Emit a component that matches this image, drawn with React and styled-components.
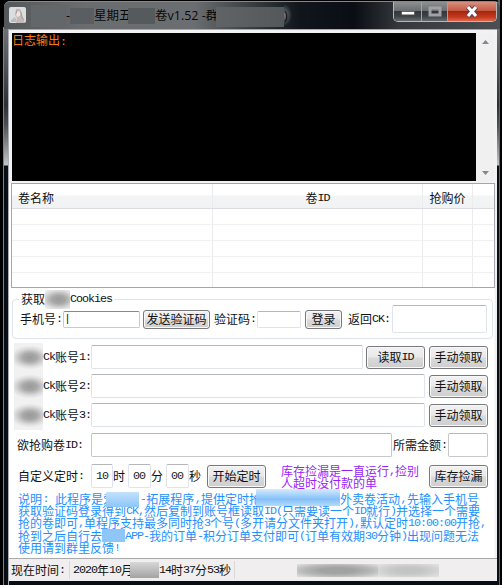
import React from 'react';
import styled, { createGlobalStyle } from 'styled-components';

const Global = createGlobalStyle`
  * { box-sizing: border-box; }
  body { margin: 0; background: #000; overflow: hidden; }
`;

const CJK = '"Noto Sans CJK SC", sans-serif';

const Frame = styled.div`
  width: 502px;
  height: 585px;
  display: grid;
  grid-template-rows: 29px 552px;
  padding: 0 5px 4px 9px;
  background:
    linear-gradient(90deg, #000 3px, transparent 3px 500px, #000 500px),
    linear-gradient(90deg, transparent 3px, #7d8288 3px 4px, transparent 4px 8px, #a9adb3 8px 9px, transparent 9px 499px, #62676c 499px 500px, transparent 500px),
    linear-gradient(#55585b 0, #6c7073 30px, #54585c 60px, #2b3035 105px, #4c5054 125px, #c2c4c6 165px, #080e16 166px);
  font: 12px/14px ${CJK};
  color: #111;
`;

const TitleBar = styled.header`
  display: flex;
  margin: 1px -3px 0 -5px;
  padding-left: 5px;
  border-top: 1px solid #85888c;
  border-radius: 6px 6px 0 0;
  box-shadow: -4px -4px 0 2px #000;
  background: linear-gradient(90deg, #55585b 0, #6a6d70 80px, #6b6e71 190px, #4b5053 225px, #10161c 295px, #0a0e14 350px, #34383c 395px, #4c5053 498px);
`;

const Avatar = styled.svg`
  width: 17px;
  height: 16px;
  margin: 5px 4px 0 0;
`;

const Title = styled.div`
  display: flex;
  flex: 1;
  height: 26px;
  color: #080808;
  font: 12.5px/27px "Open Sans", ${CJK};
  white-space: pre;
`;

const TitlePart = styled.span`
  flex: none;
  width: ${p => p.$w}px;
  white-space: pre;
  background: ${p => (p.$glow ? 'radial-gradient(ellipse 8px 11px at 0 50%, #777b7e, transparent)' : 'none')};
`;

const Mosaic = styled.i`
  flex: none;
  position: relative;
  display: inline-block;
  width: ${p => p.$w}px;
  height: ${p => p.$h}px;
  margin: ${p => p.$m || 0};
  background: ${p => p.$bg};
`;

const Controls = styled.div`
  display: grid;
  grid-template-columns: 28px 26px 48px;
  width: 104px;
  height: 20px;
  margin-right: 3px;
  border: 1px solid #b5b7b9;
  border-top: 0;
  border-radius: 0 0 5px 5px;
  overflow: hidden;
`;

const Control = styled.button`
  display: grid;
  place-items: center;
  padding: 0;
  border: 0;
  border-right: ${p => (p.$close ? '0' : '1px solid #a0a2a5')};
  background: ${p => (p.$close
    ? 'linear-gradient(#d8907f 0, #c65a45 45%, #a92410 50%, #c33b20 80%, #e0674a 100%)'
    : 'linear-gradient(#8d9092 0, #6c6f72 45%, #34383b 50%, #3f4346 75%, #686b6e 100%)')};
`;

const Client = styled.main`
  width: 488px;
  background: linear-gradient(90deg, #fff 485px, #f1f1f3 486px);
  overflow: hidden;
  display: flex;
  flex-direction: column;
`;

const Log = styled.section`
  display: flex;
  flex: none;
  height: 154px;
  padding: 3px 3px 2px 3px;
  border-top: 1px solid #a6a8ad;
  background: #f2f2f5;
`;

const Console = styled.div`
  flex: 1;
  background: #000;
  color: #f57b0c;
  line-height: 13px;
`;

const Scroll = styled.div`
  width: 18px;
  display: flex;
  flex-direction: column;
  justify-content: space-between;
  align-items: center;
  padding: 7px 0 6px;
  background: #f0f0f1;
`;

const List = styled.section`
  flex: none;
  height: 105px;
  width: 484px;
  margin-left: 2px;
  border: 1px solid #a4a5ad;
  background: #fff;
`;

const ListRow = styled.div`
  display: grid;
  grid-template-columns: 201px 210px 50px 1fr;
  height: ${p => (p.$head ? 25 : p.$last ? 14 : 16)}px;
  border-bottom: ${p => (p.$last ? '0' : `1px solid ${p.$head ? '#dcdde1' : '#f0f0f1'}`)};
  background: ${p => (p.$head ? 'linear-gradient(#fff 45%, #f3f4f6 50%, #f1f2f4)' : '#fff')};
`;

const Cell = styled.div`
  display: flex;
  align-items: center;
  justify-content: ${p => p.$align || 'center'};
  border-right: 1px solid #ececef;
  padding: 3px 0 0 ${p => (p.$align ? 6 : 0)}px;
  &:last-child { border: 0; }
`;

const Latin = styled.span`
  font: 11.7px/8px "Liberation Mono", monospace;
  letter-spacing: -1.02px;
  white-space: pre;
`;

const Group = styled.fieldset`
  flex: none;
  display: block;
  width: 481px;
  height: 47px;
  margin: 4px 0 0 3px;
  padding: 0;
  border: 1px solid #dce5ed;
  border-radius: 4px;
`;

const Legend = styled.legend`
  display: flex;
  align-items: center;
  height: 14px;
  margin-left: 6px;
  padding: 0 2px;
`;

const Row = styled.div`
  display: grid;
  flex: none;
  grid-template-columns: ${p => p.$cols};
  align-items: center;
  height: ${p => p.$h || 24}px;
  margin: ${p => p.$m || 0};
`;

const Label = styled.label`
  display: flex;
  align-items: center;
  height: 14px;
  white-space: nowrap;
`;

const Field = styled.input`
  width: 100%;
  min-width: 0;
  height: ${p => p.$h || 24}px;
  padding: 0 0 0 ${p => p.$pad || 0}px;
  border: 1px solid ${p => (p.$focus ? '#a9d3ee' : p.$dark ? '#c6c7ca' : '#dfe4ec')};
  border-top-color: ${p => (p.$focus ? '#5c94c1' : '#b4b6bc')};
  border-radius: 2px;
  background: #fff;
  outline: 0;
  color: #222;
  font: 11.7px/14px "Liberation Mono", monospace;
  letter-spacing: -1.02px;
`;

const Button = styled.button`
  display: flex;
  align-items: center;
  justify-content: center;
  width: 100%;
  height: ${p => p.$h || 23}px;
  padding: 0;
  border: 1px solid #77797c;
  border-radius: 3px;
  box-shadow: inset 0 0 0 1px #f8f8f8;
  background: linear-gradient(#f1f1f1 0, #e9e9e9 48%, #dadada 52%, #cecece 100%);
  color: #111;
  font: 12px/14px ${CJK};
  white-space: nowrap;
`;

const Warning = styled.p`
  margin: 2px 0 0;
  color: #9a1cf8;
  line-height: 12px;
  white-space: nowrap;
`;

const WarningLine = styled.span`
  display: flex;
  align-items: center;
  height: 12px;
`;

const Notes = styled.div`
  flex: none;
  margin: 6px 0 0 9px;
  color: #1e90ff;
`;

const NoteLine = styled.p`
  width: ${p => p.$w}px;
  height: 12.2px;
  margin: 0;
  line-height: 12px;
  white-space: nowrap;
  display: flex;
  align-items: center;
  justify-content: space-between;
`;

const StatusBar = styled.footer`
  display: grid;
  flex: none;
  grid-template-columns: 59px 165px 1fr;
  align-items: center;
  height: 23px;
  margin-top: auto;
  padding-left: 2px;
  border-top: 1px solid #aaa;
  background: #f0eeee;
`;

const StatusCell = styled.div`
  display: flex;
  align-items: center;
  height: 18px;
  padding-left: ${p => p.$pad || 0}px;
  border-right: 1px solid ${p => (p.$end ? 'transparent' : '#d9d9d9')};
  white-space: nowrap;
`;

const Mixed = ({ children }) =>
  children.split(/([\x20-\x7e]+)/).map((s, i) =>
    i % 2 ? <Latin key={i}>{s}</Latin> : s && <span key={i}>{s}</span>);

const Arrow = ({ down }) => (
  <svg width="7" height="4" viewBox="0 0 7 4">
    <path d={down ? 'M0 0h7L3.5 4z' : 'M0 4h7L3.5 0z'} fill="#85878b" />
  </svg>
);

const blob = 'radial-gradient(ellipse 20px 12px at 55% 50%, #999 0, #a8a8a8 35%, #dcdcdc 75%, #f1f1f1 100%)';

const Account = ({ n }) => (
  <Label>
    <Mosaic $w={29} $h={29} $bg={blob} />
    <Latin>Ck</Latin><span>账号</span><Latin>{n}:</Latin>
  </Label>
);

export default function App() {
  return (
    <>
      <Global />
      <Frame>
        <TitleBar>
          <Avatar viewBox="0 0 17 16">
            <rect width="17" height="16" rx="2" fill="#dcdddf" />
            <path d="M7 2c4-1 6 1 5 4l2 5 2 5H7l1-5-2-3z" fill="#c5b9b9" />
            <path d="M8 4l3 1v4l-3 1-1-3z" fill="#f1e3df" />
            <path d="M2 13l4-3 2 5H2z" fill="#b7bfc1" />
            <path d="M8 3l-1 4M12 5l1 5 2 3" stroke="#9a9297" strokeWidth=".8" fill="none" />
          </Avatar>
          <Title>
            <TitlePart $w={1}>:</TitlePart>
            <Mosaic $w={35} $h={22} $m="3px 0 0" $bg="#64676a" />
            <TitlePart $w={4}>-</TitlePart>
            <Mosaic $w={24} $h={16} $m="6px 0 0" $bg="#5b5e61" />
            <TitlePart $w={34}>星期五</TitlePart>
            <Mosaic $w={27} $h={16} $m="6px 0 0" $bg="#575a5d" />
            <TitlePart $w={61}>卷v1.52 -群</TitlePart>
            <Mosaic $w={68} $h={20} $m="5px 0 0" $bg="linear-gradient(90deg, #606467, #54585b)" />
            <TitlePart $glow $w={9}>)</TitlePart>
          </Title>
          <Controls>
            <Control aria-label="minimize">
              <svg width="14" height="9"><rect x=".5" y="4.5" width="13" height="3.4" fill="#fff" stroke="#4a4d51" strokeWidth=".7" /></svg>
            </Control>
            <Control aria-label="maximize">
              <svg width="14" height="11"><rect x="2" y="2" width="10" height="7" fill="none" stroke="#a0a2a5" strokeWidth="3" /></svg>
            </Control>
            <Control $close aria-label="close">
              <svg width="14" height="13" viewBox="0 0 14 13">
                <path d="M3 2l8 9M11 2l-8 9" stroke="#55434b" strokeWidth="5" />
                <path d="M3 2l8 9M11 2l-8 9" stroke="#fff" strokeWidth="3.2" />
              </svg>
            </Control>
          </Controls>
        </TitleBar>
        <Client>
          <Log>
            <Console><Mixed>日志输出:</Mixed></Console>
            <Scroll><Arrow /><Arrow down /></Scroll>
          </Log>
          <List>
            <ListRow $head>
              <Cell $align="flex-start">卷名称</Cell>
              <Cell><Mixed>卷ID</Mixed></Cell>
              <Cell>抢购价</Cell>
              <Cell />
            </ListRow>
            {[0, 1, 2, 3, 4].map(i => (
              <ListRow key={i} $last={i === 4}><Cell /><Cell /><Cell /><Cell /></ListRow>
            ))}
          </List>
          <Group>
            <Legend>
              <span>获取</span><Mosaic $w={25} $h={19} $bg={blob} /><Latin>Cookies</Latin>
            </Legend>
            <Row $h={28} $m="-1px 0 0 7px" $cols="43px 77px 3px 67px 4px 43px 44px 4px 37px 6px 44px 95px">
              <Label><Mixed>手机号:</Mixed></Label>
              <Field $h={17} $focus defaultValue="|" />
              <i />
              <Button $h={19}>发送验证码</Button>
              <i />
              <Label><Mixed>验证码:</Mixed></Label>
              <Field $h={17} />
              <i />
              <Button $h={19}>登录</Button>
              <i />
              <Label><Mixed>返回CK:</Mixed></Label>
              <Field $h={28} />
            </Row>
          </Group>
          <Row $m="6px 0 0 5px" $cols="77px 272px 3px 59px 4px 59px">
            <Account n={1} /><Field /><i />
            <Button><Mixed>读取ID</Mixed></Button><i />
            <Button>手动领取</Button>
          </Row>
          {[2, 3].map(n => (
            <Row key={n} $m="5px 0 0 5px" $cols="77px 334px 4px 59px">
              <Account n={n} /><Field /><i /><Button>手动领取</Button>
            </Row>
          ))}
          <Row $m="6px 0 0 8px" $cols="74px 301px 1px 55px 40px">
            <Label><Mixed>欲抢购卷ID:</Mixed></Label><Field $dark /><i />
            <Label><Mixed>所需金额:</Mixed></Label><Field $dark />
          </Row>
          <Row $m="6px 0 0 9px" $cols="73px 22px 15px 23px 15px 23px 18px 59px 15px 148px 59px">
            <Label><Mixed>自定义定时:</Mixed></Label>
            <Field $pad={4} defaultValue="10" /><Label>时</Label>
            <Field $pad={4} defaultValue="00" /><Label>分</Label>
            <Field $pad={4} defaultValue="00" /><Label>秒</Label>
            <Button>开始定时</Button><i />
            <Warning>
              <WarningLine><Mixed>库存捡漏是一直运行,捡别</Mixed></WarningLine>
              <WarningLine>人超时没付款的单</WarningLine>
            </Warning>
            <Button>库存捡漏</Button>
          </Row>
          <Notes>
            <NoteLine $w={461}>
              <Mixed>说明: 此程序是爱</Mixed>
              <Mosaic $w={33} $h={15} $m="0 0 0 -9px" $bg="linear-gradient(#c3e1fc, #8dc6fa)" />
              <Mixed>-拓展程序,提供定时抢</Mixed>
              <Mosaic $w={84} $h={17} $m="-3px 0 0 -6px" $bg="linear-gradient(#d6ebfd, #84c1fa 60%, #b5dafb)" />
              <Mixed>外卖卷活动,先输入手机号</Mixed>
            </NoteLine>
            <NoteLine $w={461}><Mixed>获取验证码登录得到CK,然后复制到账号框读取ID(只需要读一个ID就行)并选择一个需要</Mixed></NoteLine>
            <NoteLine $w={464}><Mixed>抢的卷即可,单程序支持最多同时抢3个号(多开请分文件夹打开),默认定时10:00:00开抢,</Mixed></NoteLine>
            <NoteLine $w={461}>
              <Mixed>抢到之后自行去</Mixed>
              <Mosaic $w={23} $h={13} $bg="#8fc6fa" />
              <Mixed>APP-我的订单-积分订单支付即可(订单有效期30分钟)出现问题无法</Mixed>
            </NoteLine>
            <NoteLine $w={102}><Mixed>使用请到群里反馈!</Mixed></NoteLine>
          </Notes>
          <StatusBar>
            <StatusCell><Mixed>现在时间:</Mixed></StatusCell>
            <StatusCell $pad={3}>
              <Mixed>2020年10月</Mixed>
              <Mosaic $w={29} $h={16} $m="0 0 0 -3px" $bg="linear-gradient(#d8d8d8, #a3a3a3)" />
              <Mixed>14时37分53秒</Mixed>
            </StatusCell>
            <StatusCell $end $pad={62}>
              <Mosaic $w={81} $h={13} $bg="radial-gradient(ellipse, #a2a2a2 30%, #b8b8b8 60%, #e2e2e2)" />
              <Mosaic $w={61} $h={13} $bg="radial-gradient(ellipse, #c4c4c4 30%, #d0d0d0 60%, #e4e4e4)" />
            </StatusCell>
          </StatusBar>
        </Client>
      </Frame>
    </>
  );
}
